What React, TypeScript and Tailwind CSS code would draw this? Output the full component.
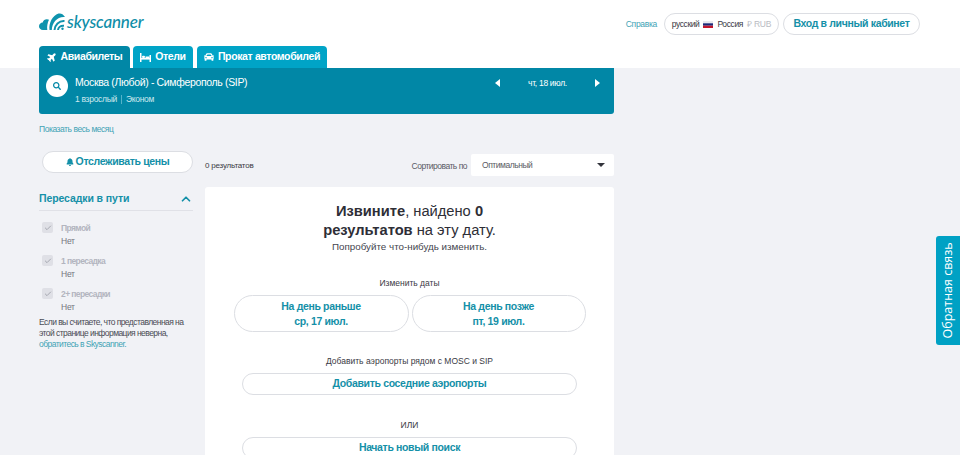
import React from "react";
import { FaBell, FaCar, FaPlane, FaSearch } from "react-icons/fa";
import { Check, ChevronUp } from "lucide-react";

function Logo() {
  return (
    <div className="flex items-end gap-[2px]">
      <svg width="26" height="17" viewBox="0 0 26 17" className="text-[#0e93ad]">
        <path d="M4 17C1.500 17 0 15.300 0 13.300 0 11 1.700 9.500 3.700 9.400 4.400 7.400 6 6.200 8 6.300 8.800 6.300 9.500 6.500 10 6.800 8.500 9.800 7.800 13.500 8.300 17Z" fill="currentColor" />
        <path d="M10.500 17C9.700 10 13.500 2.500 19.500.6 21.800 0 24 1 26 4 19 3 13 9 12.800 17Z" fill="currentColor" />
        <path d="M15.500 17C15.800 12 20 7.500 25.500 8" fill="none" stroke="currentColor" strokeWidth="2" />
        <path d="M19 17C19.300 14.500 21.500 12.500 25 12.800" fill="none" stroke="currentColor" strokeWidth="2" />
        <circle cx="23.500" cy="15.800" r="1.200" fill="currentColor" />
      </svg>
      <span className="font-['Lato',sans-serif] text-[17px] leading-[17px] font-medium italic tracking-[-0.2px] text-[#0f8ea8]">skyscanner</span>
    </div>
  );
}

function BedIcon() {
  return (
    <svg width="11" height="9" viewBox="0 0 11 9" fill="currentColor">
      <rect x="0" y="0" width="1.500" height="9" />
      <rect x="9.500" y="2" width="1.500" height="7" />
      <rect x="1" y="5" width="9" height="1.600" />
      <rect x="2" y="2.800" width="3" height="2.200" rx="1" />
      <rect x="5.500" y="3.500" width="4" height="1.500" />
    </svg>
  );
}

function Tab({ active, icon, label, w }: { active?: boolean; icon: React.ReactNode; label: string; w: string }) {
  return (
    <div className={`flex h-full items-center justify-center gap-[4px] whitespace-nowrap rounded-t-[4px] text-[10.500px] font-bold tracking-[-0.37px] text-white ${w} ${active ? "bg-[#0187a6]" : "bg-[#00a4c7]"}`}>
      {icon}
      <span>{label}</span>
    </div>
  );
}

function Stop({ label }: { label: string }) {
  return (
    <div className="flex h-[33px] items-start pl-[3px]">
      <div className="flex h-[11px] w-[11px] items-center justify-center rounded-[2px] bg-[#dfe0e6]">
        <Check size={8} strokeWidth={2.5} className="text-[#9a9ca6]" />
      </div>
      <div className="ml-[8px] text-[8.500px] leading-[13px] tracking-[-0.25px]">
        <div className="font-bold tracking-[-0.6px] text-[#b3b5bf]">{label}</div>
        <div className="text-[#74767f]">Нет</div>
      </div>
    </div>
  );
}

function Pill({ children, className }: { children: React.ReactNode; className?: string }) {
  return (
    <div className={`flex items-center justify-center rounded-full border-[1.5px] border-[#dcdee3] bg-white font-bold tracking-[-0.35px] text-[#1490a8] ${className ?? ""}`}>{children}</div>
  );
}

export default function App() {
  return (
    <div className="relative h-[455px] w-[960px] overflow-hidden bg-[#f1f2f6] font-['Liberation_Sans',Arial,sans-serif] text-[#3a3a44]">
      <header className="flex h-[68px] flex-col bg-white px-[39px]">
        <div className="flex h-[46px] items-start justify-between">
          <div className="pt-[13px]"><Logo /></div>
          <div className="mr-[1px] flex items-center pt-[13px]">
            <span className="mr-[7px] text-[8.500px] tracking-[-0.3px] text-[#3fa3b5]">Справка</span>
            <div className="flex h-[22px] w-[115px] items-center justify-center rounded-full border-[1.5px] border-[#dcdee3] text-[8.500px] tracking-[-0.4px]">
              <span>русский</span>
              <svg width="10" height="7" viewBox="0 0 10 7" className="mx-[4px]">
                <rect width="10" height="2.300" fill="#e8e8ee" />
                <rect y="2.300" width="10" height="2.400" fill="#1c2a78" />
                <rect y="4.700" width="10" height="2.300" fill="#c3162c" />
              </svg>
              <span>Россия</span>
              <span className="ml-[4px] tracking-[-0.2px] text-[#b9bbc2]">₽ RUB</span>
            </div>
            <Pill className="ml-[4px] h-[22px] w-[137px] text-[10.500px]">Вход в личный кабинет</Pill>
          </div>
        </div>
        <div className="flex h-[22px] gap-[3px]">
          <Tab active w="w-[91px]" icon={<FaPlane size={10} className="-rotate-45" />} label="Авиабилеты" />
          <Tab w="w-[60px]" icon={<BedIcon />} label="Отели" />
          <div className="ml-[1px] flex h-full">
            <Tab w="w-[130px]" icon={<FaCar size={10} />} label="Прокат автомобилей" />
          </div>
        </div>
      </header>

      <main className="px-[39px]">
        <section className="flex h-[46px] w-[575px] items-start rounded-b-[3px] bg-[#0187a6] text-white">
          <div className="ml-[7px] mt-[7px] flex h-[22px] w-[22px] items-center justify-center rounded-full bg-white">
            <FaSearch size={8} className="text-[#0187a6]" />
          </div>
          <div className="ml-[7px] w-[420px]">
            <div className="mt-[8px] text-[10.500px] leading-[13px] tracking-[-0.35px]">Москва (Любой) - Симферополь (SIP)</div>
            <div className="mt-[5px] flex items-center text-[8.500px] leading-[11px] tracking-[-0.3px] text-[#cfe9ef]">
              <span>1 взрослый</span>
              <span className="mx-[4px] h-[9px] w-px bg-[#55b3c9]" />
              <span>Эконом</span>
            </div>
          </div>
          <div className="mt-[10px] flex w-[105px] items-center justify-between">
            <span className="h-0 w-0 border-y-[4px] border-r-[5px] border-y-transparent border-r-white" />
            <span className="text-[8.500px] leading-[10px] tracking-[-0.3px]">чт, 18 июл.</span>
            <span className="h-0 w-0 border-y-[4px] border-l-[5px] border-y-transparent border-l-white" />
          </div>
        </section>

        <div className="mt-[10px] text-[8.500px] leading-[11px] tracking-[-0.45px] text-[#3fa3b5]">Показать весь месяц</div>

        <div className="mt-[16px] flex gap-[12px]">
          <aside className="w-[154px]">
            <Pill className="ml-[3px] h-[22px] w-[151px] gap-[2px] text-[10.500px]">
              <FaBell size={8} />
              <span>Отслеживать цены</span>
            </Pill>
            <div className="mt-[19px] flex h-[19px] items-start justify-between border-b border-[#e0e1e7]">
              <span className="text-[10.500px] font-bold leading-[13px] tracking-[-0.1px] text-[#1490a8]">Пересадки в пути</span>
              <ChevronUp size={14} strokeWidth={3} className="text-[#1490a8]" />
            </div>
            <div className="mt-[11px]">
              <Stop label="Прямой" />
              <Stop label="1 пересадка" />
              <Stop label="2+ пересадки" />
            </div>
            <p className="-mt-[4px] w-[150px] text-[8.500px] leading-[11px] tracking-[-0.55px] text-[#4a4b55]">
              Если вы считаете, что представленная на этой странице информация неверна,{" "}
              <span className="text-[#3fa3b5]">обратитесь в Skyscanner.</span>
            </p>
          </aside>

          <div className="w-[409px]">
            <div className="flex h-[25px] items-end">
              <span className="pb-[5px] text-[8px] leading-[10px] tracking-[-0.2px]">0 результатов</span>
              <span className="ml-auto pb-[5px] text-[8.500px] leading-[10px] tracking-[-0.5px] text-[#5a5b65]">Сортировать по</span>
              <div className="ml-[4px] flex h-[22px] w-[143px] items-center justify-between rounded-[2px] bg-white pl-[11px] pr-[9px] text-[8.500px] tracking-[-0.45px] text-[#5a5b65]">
                <span>Оптимальный</span>
                <span className="h-0 w-0 border-x-[4.500px] border-t-[4px] border-x-transparent border-t-[#33343c]" />
              </div>
            </div>
            <section className="mt-[11px] h-[300px] rounded-t-[3px] bg-white pt-[15px]">
              <h2 className="text-center text-[14.700px] leading-[19px] text-[#2e2e36]">
                <div><b>Извините</b><span>, найдено </span><b>0</b></div>
                <div><b>результатов</b><span> на эту дату.</span></div>
              </h2>
              <p className="mt-[0px] text-center text-[9.800px] leading-[13px] text-[#44454e]">Попробуйте что-нибудь изменить.</p>
              <p className="mt-[25px] text-center text-[8.500px] leading-[11px]">Изменить даты</p>
              <div className="mt-[6px] flex justify-center gap-[3px]">
                <Pill className="h-[37px] w-[175px] flex-col rounded-[16px] text-[10.500px] leading-[14.500px]">
                  <span>На день раньше</span>
                  <span>ср, 17 июл.</span>
                </Pill>
                <Pill className="h-[37px] w-[174px] flex-col rounded-[16px] text-[10.500px] leading-[14.500px]">
                  <span>На день позже</span>
                  <span>пт, 19 июл.</span>
                </Pill>
              </div>
              <p className="mt-[24px] text-center text-[8.500px] leading-[11px]">Добавить аэропорты рядом с MOSC и SIP</p>
              <Pill className="mx-auto mt-[6px] h-[22px] w-[335px] text-[10.500px]">Добавить соседние аэропорты</Pill>
              <p className="mt-[25px] text-center text-[8.500px] leading-[11px]">ИЛИ</p>
              <Pill className="mx-auto mt-[6px] h-[22px] w-[335px] text-[10.500px]">Начать новый поиск</Pill>
            </section>
          </div>
        </div>
      </main>

      <div className="absolute left-[936px] top-[236px] flex h-[109px] w-[24px] items-center justify-center rounded-l-[3px] bg-[#00a1c4]">
        <span className="-rotate-90 whitespace-nowrap font-['Open_Sans',sans-serif] text-[12.500px] text-white">Обратная связь</span>
      </div>
    </div>
  );
}
